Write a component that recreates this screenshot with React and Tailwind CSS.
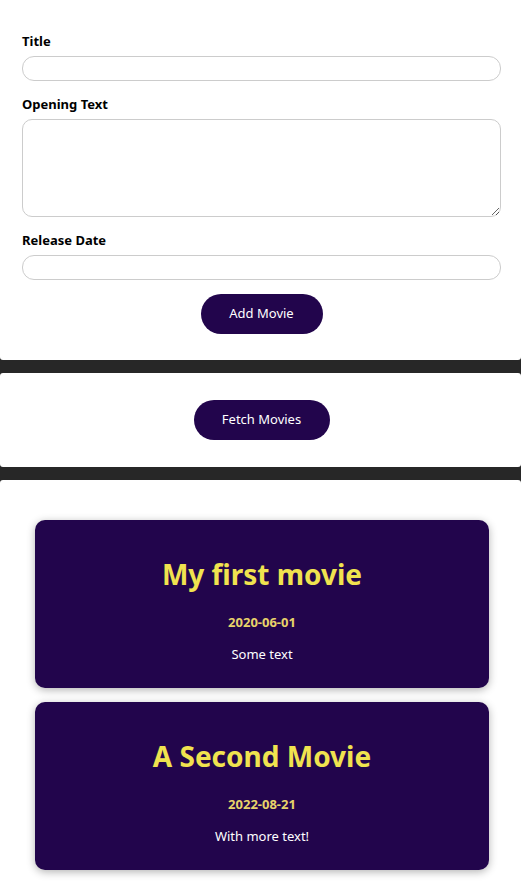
// 영화 추가 폼 + 목록 화면
const movies = [
  { id: 1, title: 'My first movie', date: '2020-06-01', text: 'Some text' },
  { id: 2, title: 'A Second Movie', date: '2022-08-21', text: 'With more text!' },
]

function Field({ label, area }) {
  return (
    <div className="mb-[14px]">
      <label className="block text-[13px] font-bold leading-[18px] text-black">{label}</label>
      {area ? (
        <textarea className="mt-[6px] block h-[98px] w-full rounded-[10px] border border-[#ccc] outline-none" />
      ) : (
        <input type="text" className="mt-[6px] block h-[25px] w-full rounded-[12px] border border-[#ccc] outline-none" />
      )}
    </div>
  )
}

export default function App() {
  return (
    <div className="flex min-h-[882px] flex-col gap-[13px] bg-[#272727] font-['Noto_Sans',sans-serif]">
      <section className="rounded-b-[3px] bg-white pb-[26px] pl-[22px] pr-[20px] pt-[32px]">
        <Field label="Title" />
        <Field label="Opening Text" area />
        <Field label="Release Date" />
        <div className="flex justify-center">
          <button className="h-[40px] w-[122px] rounded-[20px] bg-[#22054c] text-[13px] text-white">Add Movie</button>
        </div>
      </section>

      <section className="flex justify-center rounded-[3px] bg-white py-[27px] pl-[2px]">
        <button className="h-[40px] w-[136px] rounded-[20px] bg-[#22054c] text-[13px] text-white">Fetch Movies</button>
      </section>

      <section className="flex flex-1 flex-col gap-[14px] rounded-t-[3px] bg-white pl-[35px] pr-[32px] pt-[40px]">
        {movies.map((m) => (
          <div key={m.id} className="flex h-[168px] flex-col items-center rounded-[10px] bg-[#22054c] pt-[36px] text-center shadow-[0_2px_8px_rgba(0,0,0,0.3)]">
            <h2 className="text-[28px] font-bold leading-[36px] text-[#f0e34f]">{m.title}</h2>
            <h3 className="mt-[21px] text-[13px] font-bold leading-[18px] text-[#e8d36a]">{m.date}</h3>
            <p className="mt-[14px] text-[13px] leading-[18px] text-white">{m.text}</p>
          </div>
        ))}
      </section>
    </div>
  )
}
